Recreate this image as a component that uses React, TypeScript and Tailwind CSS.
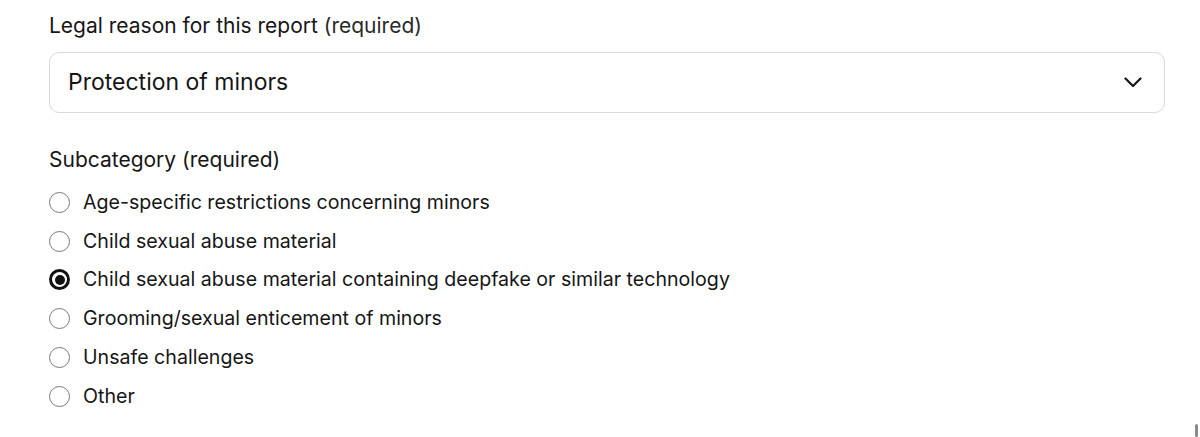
import React from "react";

const options = [
  "Age-specific restrictions concerning minors",
  "Child sexual abuse material",
  "Child sexual abuse material containing deepfake or similar technology",
  "Grooming/sexual enticement of minors",
  "Unsafe challenges",
  "Other",
];

export default function App() {
  return (
    <div
      className="relative w-[1200px] h-[437px] bg-white text-[#161616] overflow-hidden"
      style={{ fontFamily: "Inter, 'Noto Sans', sans-serif" }}
    >
      <div className="pl-[49px] pr-[35px] pt-[13px]">
        <div className="text-[21px] leading-[26px]">
          Legal reason for this report <span className="text-[#2a2a2a]">(required)</span>
        </div>
        <div className="mt-[13px] h-[61px] rounded-[10px] border border-[#d9d9de] flex items-center justify-between pl-[18px] pr-[22px]">
          <span className="text-[23px]">Protection of minors</span>
          <svg width="18" height="11" viewBox="0 0 18 11" fill="none">
            <path d="M1.5 1.5L9 9L16.5 1.5" stroke="#161616" strokeWidth="2.2" strokeLinecap="round" strokeLinejoin="round" />
          </svg>
        </div>
        <div className="mt-[34px] text-[21px] leading-[26px]">Subcategory (required)</div>
        <div className="mt-[10px] flex flex-col">
          {options.map((o, i) => (
            <div key={o} className="flex items-center h-[38.8px] gap-[13px]">
              {i === 2 ? (
                <span className="w-[21px] h-[21px] rounded-full bg-[#111] flex items-center justify-center">
                  <span className="w-[15px] h-[15px] rounded-full bg-white flex items-center justify-center">
                    <span className="w-[10px] h-[10px] rounded-full bg-[#111]" />
                  </span>
                </span>
              ) : (
                <span className="w-[21px] h-[21px] rounded-full border-[1.5px] border-[#7a7a7a] bg-white" />
              )}
              <span className="text-[19.6px]">{o}</span>
            </div>
          ))}
        </div>
      </div>
      <div className="absolute left-[1195px] top-[424px] w-[3px] h-[13px] rounded-full bg-[#8a8a8a]" />
    </div>
  );
}
